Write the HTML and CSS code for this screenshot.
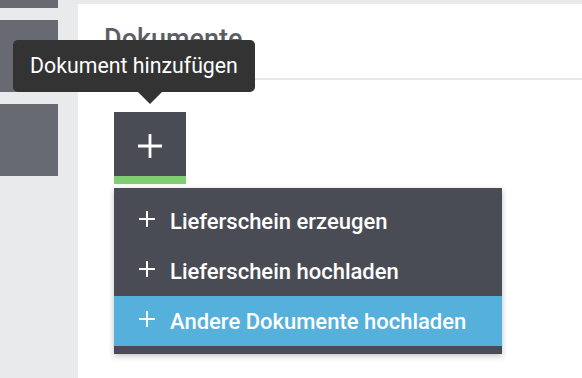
FILE: index.html
```html
<!DOCTYPE html>
<html lang="de">
<head>
<meta charset="utf-8">
<link rel="stylesheet" href="styles.css">
</head>
<body>
<div class="app">
  <aside class="sidebar">
    <div class="side-block first"></div>
    <div class="side-block"></div>
    <div class="side-block"></div>
  </aside>
  <main class="panel">
    <h1 class="title">Dokumente</h1>
    <div class="content">
      <div class="add-wrap">
        <div class="tooltip">Dokument hinzufügen</div>
        <button class="add-btn" type="button">
          <svg width="26" height="26" viewBox="0 0 26 26"><path d="M13 1v24M1 13h24" stroke="#fff" stroke-width="2.8" fill="none"/></svg>
        </button>
        <ul class="menu">
          <li class="item"><svg class="plus" width="16" height="16" viewBox="0 0 16 16"><path d="M8 0v16M0 8h16" stroke="#fff" stroke-width="2" fill="none"/></svg>Lieferschein erzeugen</li>
          <li class="item"><svg class="plus" width="16" height="16" viewBox="0 0 16 16"><path d="M8 0v16M0 8h16" stroke="#fff" stroke-width="2" fill="none"/></svg>Lieferschein hochladen</li>
          <li class="item active"><svg class="plus" width="16" height="16" viewBox="0 0 16 16"><path d="M8 0v16M0 8h16" stroke="#fff" stroke-width="2" fill="none"/></svg>Andere Dokumente hochladen</li>
        </ul>
      </div>
    </div>
  </main>
</div>
</body>
</html>
```
FILE: styles.css
```css
* { box-sizing: border-box; }
html, body { margin: 0; padding: 0; }
body {
  width: 582px;
  height: 378px;
  overflow: hidden;
  background: #e9eaec;
  font-family: Roboto, "Noto Sans", sans-serif;
}
.app {
  display: flex;
  height: 378px;
}
.sidebar {
  width: 78px;
  flex: none;
  display: flex;
  flex-direction: column;
  gap: 12px;
  margin-top: -64px;
}
.side-block {
  width: 58px;
  height: 72px;
  background: #686a73;
  flex: none;
}
.panel {
  flex: 1;
  margin-top: 4px;
  background: #fff;
}
.title {
  margin: 0;
  height: 76px;
  padding: 19px 0 0 26px;
  font-size: 27px;
  line-height: normal;
  font-weight: 500;
  color: #5c5e66;
  border-bottom: 2px solid #e8e8ea;
}
.content {
  padding: 32px 0 0 36px;
}
.add-wrap {
  position: relative;
  width: 388px;
}
.tooltip {
  position: absolute;
  left: -101px;
  top: -72px;
  width: 242px;
  height: 52px;
  background: #333333;
  color: #fff;
  border-radius: 5px;
  font-size: 21.3px;
  line-height: 52px;
  text-align: center;
  white-space: nowrap;
}
.tooltip::after {
  content: "";
  position: absolute;
  left: 125px;
  top: 52px;
  border-left: 12px solid transparent;
  border-right: 12px solid transparent;
  border-top: 12px solid #333333;
}
.add-btn {
  display: flex;
  align-items: center;
  justify-content: center;
  width: 72px;
  height: 72px;
  padding: 4px 0 0;
  border: 0;
  border-bottom: 8px solid #7fce72;
  background: #4a4c55;
  margin: 0;
}
.menu {
  list-style: none;
  margin: 4px 0 0;
  padding: 8px 0;
  width: 388px;
  background: #4a4c55;
  box-shadow: 0 2px 6px rgba(0,0,0,0.25);
}
.item {
  height: 50px;
  display: flex;
  align-items: center;
  padding-left: 25px;
  color: #fff;
  font-size: 22px;
  font-weight: 500;
}
.item.active {
  background: #55b0dc;
}
.plus {
  flex: none;
  margin-right: 15px;
  margin-top: -4px;
}
```
